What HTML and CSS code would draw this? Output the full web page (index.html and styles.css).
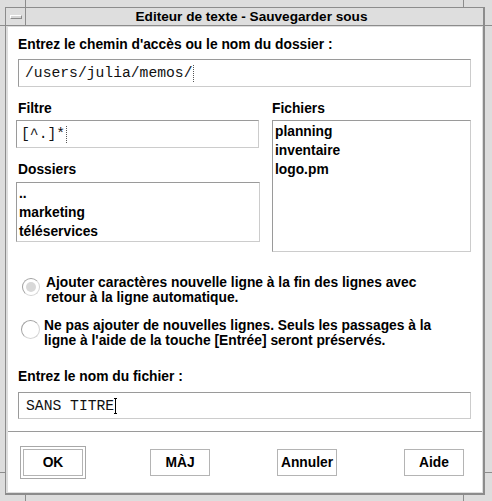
FILE: index.html
```html
<!DOCTYPE html>
<html lang="fr">
<head>
<meta charset="utf-8">
<title>Editeur de texte - Sauvegarder sous</title>
<link rel="stylesheet" href="styles.css">
</head>
<body>
<div class="frame">
  <span class="notch v top l"></span>
  <span class="notch v top r"></span>
  <span class="notch v bot l"></span>
  <span class="notch v bot r"></span>
  <span class="notch h left t"></span>
  <span class="notch h left b"></span>
  <span class="notch h right t"></span>
  <span class="notch h right b"></span>
  <div class="win">
    <div class="titlebar">
      <div class="menu"><span class="menu-bar"></span></div>
      <div class="title">Editeur de texte - Sauvegarder sous</div>
    </div>
    <div class="content">
      <div class="main">
        <div class="label">Entrez le chemin d'accès ou le nom du dossier :</div>
        <div class="field path">/users/julia/memos/<span class="caret dotted"></span></div>
        <div class="cols">
          <div class="col-left">
            <div class="label">Filtre</div>
            <div class="field filter">[^.]*<span class="caret dotted"></span></div>
            <div class="label lbl-dossiers">Dossiers</div>
            <div class="list dossiers">
              <div class="item">..</div>
              <div class="item">marketing</div>
              <div class="item">téléservices</div>
            </div>
          </div>
          <div class="col-right">
            <div class="label">Fichiers</div>
            <div class="list fichiers">
              <div class="item">planning</div>
              <div class="item">inventaire</div>
              <div class="item">logo.pm</div>
            </div>
          </div>
        </div>
        <div class="radios">
          <div class="radio">
            <span class="circle selected"></span>
            <span class="rtext">Ajouter caractères nouvelle ligne à la fin des lignes avec<br>retour à la ligne automatique.</span>
          </div>
          <div class="radio second">
            <span class="circle"></span>
            <span class="rtext">Ne pas ajouter de nouvelles lignes. Seuls les passages à la<br>ligne à l'aide de la touche [Entrée] seront préservés.</span>
          </div>
        </div>
        <div class="label lbl-file">Entrez le nom du fichier :</div>
        <div class="field filename">SANS TITRE<span class="caret ibeam"></span></div>
      </div>
      <div class="buttons">
        <div class="btn default">OK</div>
        <div class="btn">MÀJ</div>
        <div class="btn">Annuler</div>
        <div class="btn">Aide</div>
      </div>
    </div>
  </div>
</div>
</body>
</html>
```

FILE: styles.css
```css
* { box-sizing: border-box; }
html, body { margin: 0; padding: 0; }
body {
  width: 492px;
  height: 501px;
  overflow: hidden;
  background: #dddddd;
  font-family: "Liberation Sans", Arial, sans-serif;
  font-weight: bold;
  font-size: 13.8px;
  color: #000;
}
.frame {
  position: relative;
  width: 492px;
  height: 501px;
  padding: 7px 7px 6px 5px;
}
/* resize-corner notches in the frame */
.notch { position: absolute; background: #8c8c8c; }
.notch.v { width: 1px; height: 7px; }
.notch.v.top { top: 0; }
.notch.v.bot { bottom: 0; height: 6px; }
.notch.v.l { left: 25px; }
.notch.v.r { left: 463px; }
.notch.h { height: 1px; }
.notch.h.left { left: 0; width: 5px; }
.notch.h.right { right: 0; width: 7px; }
.notch.h.t { top: 25px; }
.notch.h.b { top: 472px; }

.win {
  height: 488px;
  border-style: solid;
  border-color: #8c8c8c;
  border-width: 1px 2px 2px 1px;
  display: flex;
  flex-direction: column;
}
.titlebar {
  height: 18px;
  border-bottom: 1px solid #8c8c8c;
  display: flex;
  background: #dedede;
}
.menu {
  width: 20px;
  border-right: 1px solid #8c8c8c;
  display: flex;
  align-items: center;
  justify-content: center;
  padding-left: 1px;
}
.menu-bar {
  display: block;
  width: 12px;
  height: 4px;
  border-top: 1px solid #ffffff;
  border-left: 1px solid #ffffff;
  border-bottom: 1px solid #8c8c8c;
  border-right: 1px solid #8c8c8c;
  background: #d6d6d6;
}
.title {
  flex: 1;
  text-align: center;
  line-height: 17px;
  padding-right: 6px;
  white-space: nowrap;
  font-size: 13.6px;
}
.content {
  flex: 1;
  margin: 1px 1px 1px 2px;
  background: #ffffff;
  display: flex;
  flex-direction: column;
}
.main {
  padding: 10px 11px 12px 10px;
}
.label {
  line-height: 16px;
  height: 16px;
  white-space: nowrap;
}
.field {
  display: flex;
  align-items: center;
  height: 28px;
  margin-top: 6px;
  padding-left: 6px;
  border-style: solid;
  border-width: 1px;
  border-color: #9a9a9a #cccccc #cccccc #9a9a9a;
  font-family: "Liberation Mono", "Courier New", monospace;
  font-weight: normal;
  font-size: 14.7px;
  color: #111;
  white-space: pre;
}
.caret {
  position: relative;
  display: inline-block;
  width: 1px;
  height: 17px;
  margin-left: 1px;
}
.caret.dotted { border-left: 1px dotted #555; width: 0; }
.caret.ibeam { background: #000; height: 16px; }
.caret.ibeam::before, .caret.ibeam::after {
  content: "";
  position: absolute;
  left: -1px;
  width: 3px;
  height: 1px;
  background: #000;
}
.caret.ibeam::before { top: 0; }
.caret.ibeam::after { bottom: 0; }

.cols {
  display: flex;
  margin-top: 14px;
}
.col-left {
  width: 244px;
  margin-left: -2px;
}
.col-right {
  width: 200px;
  margin-left: 11px;
  padding-left: 1px;
}
.filter { margin-top: 3px; height: 28px; padding-left: 4px; width: 243px; }
.lbl-dossiers { margin-top: 14px; padding-left: 2px; }
.col-left > .label:first-child { padding-left: 2px; }
.list {
  border-style: solid;
  border-width: 1px;
  border-color: #9a9a9a #cccccc #cccccc #9a9a9a;
  padding: 1px 2px 0 2px;
}
.item { line-height: 19px; height: 19px; white-space: nowrap; }
.dossiers { margin-top: 4px; height: 60px; }
.fichiers { margin-top: 3px; height: 132px; }

.radios { margin-top: 23px; }
.radio { display: flex; align-items: flex-start; }
.radio.second { margin-top: 13px; }
.circle {
  flex: none;
  width: 18px;
  height: 18px;
  margin: 3px 6px 0 4px;
  border-radius: 50%;
  border: 1px solid;
  border-color: #a0a0a0 #d4d4d4 #d4d4d4 #a0a0a0;
  display: flex;
  align-items: center;
  justify-content: center;
}
.circle.selected::before {
  content: "";
  width: 10px;
  height: 10px;
  border-radius: 50%;
  background: #d8d8d8;
}
.radio.second .circle { width: 19px; height: 19px; margin: 2px 3px 0 3px; }
.radio.second .rtext { padding-left: 1px; }
.rtext { line-height: 15px; white-space: nowrap; }

.lbl-file { margin-top: 21px; }
.filename { margin-top: 7px; height: 27px; padding-left: 7px; }

.buttons {
  flex: 1;
  border-top: 1px solid #9a9a9a;
  display: flex;
  align-items: flex-start;
  gap: 67px;
  padding: 17px 0 0 15px;
}
.btn {
  width: 60px;
  height: 27px;
  border: 1px solid #b4b4b4;
  display: flex;
  align-items: center;
  justify-content: center;
  white-space: nowrap;
}
.btn.default {
  box-shadow: 0 0 0 2px #ffffff, 0 0 0 3px #a8a8a8;
}
```
